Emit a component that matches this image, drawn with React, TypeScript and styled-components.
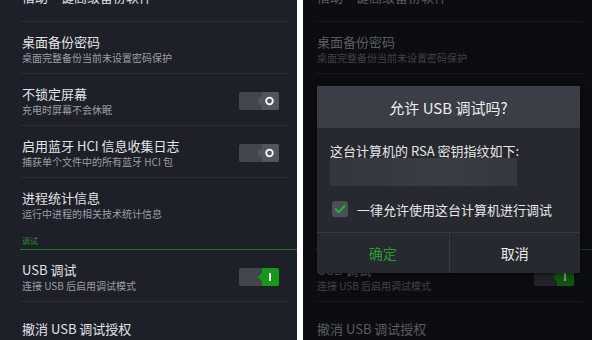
import React from "react";
import styled, { createGlobalStyle } from "styled-components";

const GlobalStyle = createGlobalStyle`
  html, body {
    margin: 0;
    padding: 0;
    background: #ffffff;
  }
  body {
    font-family: "Noto Sans CJK SC", "Noto Sans", sans-serif;
  }
`;

const Page = styled.div`
  width: 600px;
  height: 340px;
  display: flex;
  gap: 6px;
  overflow: hidden;
  background: #ffffff;
`;

const Panel = styled.div<{ $dim?: boolean; $lead?: number }>`
  position: relative;
  flex: none;
  width: 289px;
  height: 340px;
  padding-left: ${(p) => p.$lead || 0}px;
  overflow: hidden;
  background: ${(p) => (p.$dim ? "#0c0d10" : "#1d2028")};
`;

const List = styled.div`
  margin-top: -30px;
  display: flex;
  flex-direction: column;
`;

const Row = styled.div<{ $dim?: boolean; $last?: boolean }>`
  margin: 0 9px 0 12px;
  padding: 2px 9px 0 2px;
  box-sizing: border-box;
  height: 52px;
  display: flex;
  align-items: center;
  border-bottom: 1px solid
    ${(p) => (p.$last ? "transparent" : p.$dim ? "#17181c" : "#2a2d35")};
`;

const RowText = styled.div`
  flex: 1;
  display: flex;
  flex-direction: column;
  min-width: 0;
`;

const Title = styled.div<{ $dim?: boolean }>`
  font-size: 13px;
  line-height: 18px;
  color: ${(p) => (p.$dim ? "#5a5c60" : "#e2e3e5")};
  white-space: nowrap;
`;

const Summary = styled.div<{ $dim?: boolean }>`
  font-size: 10px;
  line-height: 13px;
  color: ${(p) => (p.$dim ? "#404246" : "#9c9ea3")};
  white-space: nowrap;
`;

const SectionHeader = styled.div<{ $dim?: boolean }>`
  height: 20px;
  margin-left: 12px;
  padding-left: 2px;
  box-sizing: border-box;
  display: flex;
  align-items: flex-end;
  padding-bottom: 3px;
  font-size: 8px;
  line-height: 10px;
  color: ${(p) => (p.$dim ? "#1b4a1b" : "#2f8a2f")};
  border-bottom: 1px solid ${(p) => (p.$dim ? "#0f3f10" : "#1d7a1d")};
`;

const ToggleBox = styled.svg`
  flex: none;
  display: block;
  width: 40px;
  height: 18px;
`;

const Toggle = ({ on, dim }: { on?: boolean; dim?: boolean }) => {
  const track = dim ? "#222429" : "#42464e";
  const knob = on ? (dim ? "#0d5810" : "#17981b") : dim ? "#2a2c31" : "#51555d";
  const mark = dim ? "#8a8c90" : "#ffffff";
  return (
    <ToggleBox viewBox="0 0 40 18">
      <rect x="0" y="0" width="40" height="18" rx="2" fill={track} />
      <path d="M23 0 H38 a2 2 0 0 1 2 2 V16 a2 2 0 0 1 -2 2 H23 Z" fill={knob} />
      {on ? (
        <>
          <polygon points="23,4.5 19,9 23,13.5" fill={knob} />
          <rect x="30" y="5" width="2" height="8" fill={mark} />
        </>
      ) : (
        <>
          <circle cx="23" cy="9" r="4" fill={knob} />
          <circle cx="30.5" cy="9" r="3.3" fill="none" stroke={mark} strokeWidth="1.8" />
        </>
      )}
    </ToggleBox>
  );
};

type Item =
  | { kind: "row"; title: string; summary?: string; toggle?: "on" | "off"; last?: boolean }
  | { kind: "header"; title: string };

const ITEMS: Item[] = [
  { kind: "row", title: "借助一键高级备份软件" },
  { kind: "row", title: "桌面备份密码", summary: "桌面完整备份当前未设置密码保护" },
  { kind: "row", title: "不锁定屏幕", summary: "充电时屏幕不会休眠", toggle: "off" },
  { kind: "row", title: "启用蓝牙 HCI 信息收集日志", summary: "捕获单个文件中的所有蓝牙 HCI 包", toggle: "off" },
  { kind: "row", title: "进程统计信息", summary: "运行中进程的相关技术统计信息", last: true },
  { kind: "header", title: "调试" },
  { kind: "row", title: "USB 调试", summary: "连接 USB 后启用调试模式", toggle: "on" },
  { kind: "row", title: "撤消 USB 调试授权" },
];

const SettingsList = ({ dim }: { dim?: boolean }) => (
  <List>
    {ITEMS.map((it, i) =>
      it.kind === "header" ? (
        <SectionHeader key={i} $dim={dim}>
          {it.title}
        </SectionHeader>
      ) : (
        <Row key={i} $dim={dim} $last={it.last}>
          <RowText>
            <Title $dim={dim}>{it.title}</Title>
            {it.summary && <Summary $dim={dim}>{it.summary}</Summary>}
          </RowText>
          {it.toggle && <Toggle on={it.toggle === "on"} dim={dim} />}
        </Row>
      )
    )}
  </List>
);

const Dialog = styled.div`
  position: absolute;
  left: 14px;
  top: 86px;
  width: 263px;
  background: #26292f;
  box-shadow: 0 2px 6px rgba(0, 0, 0, 0.5);
`;

const DialogTitle = styled.div`
  height: 42px;
  display: flex;
  align-items: center;
  justify-content: center;
  background: #3b3e46;
  color: #eeeeee;
  font-size: 15px;
`;

const DialogBody = styled.div`
  padding: 16px 13px 13px;
  display: flex;
  flex-direction: column;
`;

const BodyText = styled.div`
  font-size: 13px;
  line-height: 14px;
  color: #e6e6e8;
  white-space: nowrap;
`;

const Fingerprint = styled.div`
  width: 187px;
  height: 28px;
  background: linear-gradient(90deg, #33363c, #3a3d43 60%, #35383e);
  filter: blur(0.6px);
`;

const CheckRow = styled.div`
  margin-top: 13px;
  height: 20px;
  display: flex;
  align-items: center;
  gap: 9px;
  padding-left: 2px;
  font-size: 13px;
  color: #e6e6e8;
  white-space: nowrap;
`;

const CheckBox = styled.svg`
  flex: none;
  width: 16px;
  height: 16px;
  display: block;
`;

const ButtonBar = styled.div`
  height: 40px;
  display: grid;
  grid-template-columns: 1fr 1fr;
  border-top: 1px solid #363940;
`;

const DialogButton = styled.div<{ $primary?: boolean }>`
  display: flex;
  align-items: center;
  justify-content: center;
  font-size: 14px;
  color: ${(p) => (p.$primary ? "#2c9a2f" : "#ececec")};
  & + & {
    border-left: 1px solid #363940;
  }
`;

const UsbDialog = () => (
  <Dialog>
    <DialogTitle>允许 USB 调试吗?</DialogTitle>
    <DialogBody>
      <BodyText>这台计算机的 RSA 密钥指纹如下:</BodyText>
      <Fingerprint />
      <CheckRow>
        <CheckBox viewBox="0 0 16 16">
          <rect x="0" y="0" width="16" height="16" rx="2.5" fill="#4b4f57" />
          <path d="M3.8 8.3 L6.8 11.2 L12.4 5" fill="none" stroke="#27b02d" strokeWidth="2.2" strokeLinecap="round" strokeLinejoin="round" />
        </CheckBox>
        一律允许使用这台计算机进行调试
      </CheckRow>
    </DialogBody>
    <ButtonBar>
      <DialogButton $primary>确定</DialogButton>
      <DialogButton>取消</DialogButton>
    </ButtonBar>
  </Dialog>
);

export default function App() {
  return (
    <>
      <GlobalStyle />
      <Page>
        <Panel $lead={8}>
          <SettingsList />
        </Panel>
        <Panel $dim>
          <SettingsList dim />
          <UsbDialog />
        </Panel>
      </Page>
    </>
  );
}
